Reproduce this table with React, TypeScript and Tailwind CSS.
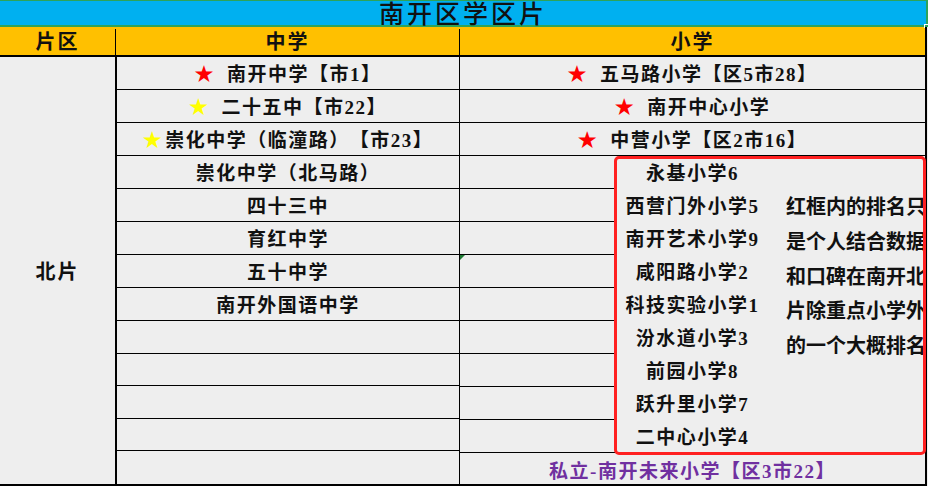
import React from "react";

type Cell = { star?: "red" | "yellow"; gap?: boolean; text: string; purple?: boolean };

const mid: Cell[] = [
  { star: "red", gap: true, text: "南开中学【市1】" },
  { star: "yellow", gap: true, text: "二十五中【市22】" },
  { star: "yellow", gap: false, text: "崇化中学（临潼路）【市23】" },
  { text: "崇化中学（北马路）" },
  { text: "四十三中" },
  { text: "育红中学" },
  { text: "五十中学" },
  { text: "南开外国语中学" },
  { text: "" },
  { text: "" },
  { text: "" },
  { text: "" },
  { text: "" },
];

const pri: Cell[] = [
  { star: "red", gap: true, text: "五马路小学【区5市28】" },
  { star: "red", gap: true, text: "南开中心小学" },
  { star: "red", gap: true, text: "中营小学【区2市16】" },
  { text: "永基小学6" },
  { text: "西营门外小学5" },
  { text: "南开艺术小学9" },
  { text: "咸阳路小学2" },
  { text: "科技实验小学1" },
  { text: "汾水道小学3" },
  { text: "前园小学8" },
  { text: "跃升里小学7" },
  { text: "二中心小学4" },
  { text: "私立-南开未来小学【区3市22】", purple: true },
];

function Content({ c }: { c: Cell }) {
  if (!c.text) return null;
  return (
    <span
      className={
        "relative z-20 whitespace-nowrap " + (c.purple ? "text-[#7030a0]" : "text-[#111111]")
      }
    >
      {c.star === "red" && (
        <span className={"text-[#ff0000] " + (c.gap ? "mr-[12px]" : "mr-[2px]")}>★</span>
      )}
      {c.star === "yellow" && (
        <span className={"text-[#ffff00] " + (c.gap ? "mr-[12px]" : "mr-[2px]")}>★</span>
      )}
      {c.text}
    </span>
  );
}

const notes = ["红框内的排名只", "是个人结合数据", "和口碑在南开北", "片除重点小学外", "的一个大概排名"];

export default function App() {
  return (
    <div
      className="relative w-[928px] h-[486px] overflow-hidden bg-[#eeeeee] [text-spacing-trim:space-all]"
      style={{ fontFamily: "'Liberation Serif', 'Noto Sans CJK SC', serif" }}
    >
      {/* title */}
      <div className="h-[27px] w-[928px] bg-[#00b0f0] border-t border-b-2 border-r-2 border-[#2ea35a] flex items-center justify-center pt-[2px]">
        <span className="text-[25px] leading-none tracking-[3px] text-[#111111] font-medium">南开区学区片</span>
      </div>
      {/* header */}
      <div className="flex h-[30px] w-[927px] bg-[#ffc000] border-b-2 border-r-2 border-black text-[20px] font-bold text-[#111111] tracking-[2px] pt-[2px]">
        <div className="w-[116px] border-r border-black flex items-center justify-center">片区</div>
        <div className="w-[344px] border-r border-black flex items-center justify-center">中学</div>
        <div className="flex-1 flex items-center justify-center">小学</div>
      </div>
      {/* body */}
      <div className="flex w-[927px] h-[429px] border-b-2 border-r-2 border-black text-[19px] font-semibold tracking-[1.5px]">
        <div className="w-[117px] border-r-2 border-black flex items-center justify-center pt-[2px]">
          <span className="text-[20px] font-bold tracking-[2px] text-[#111111]">北片</span>
        </div>
        <div className="w-[343px] border-r border-black flex flex-col">
          {mid.map((c, i) => (
            <div
              key={i}
              className={
                "h-[33px] flex items-center justify-center pt-[5px] " + (i < 12 ? "border-b border-black" : "")
              }
            >
              <Content c={c} />
            </div>
          ))}
        </div>
        <div className="flex-1 flex flex-col">
          {pri.map((c, i) => (
            <div
              key={i}
              className={
                "h-[33px] flex items-center justify-center pt-[5px] " + (i < 12 ? "border-b border-black" : "")
              }
            >
              <Content c={c} />
            </div>
          ))}
        </div>
      </div>

      {/* red frame overlay */}
      <div className="absolute z-10 left-[614px] top-[156px] w-[312px] h-[299px] border-[3px] border-[#ff2020] rounded-[5px] bg-[#eeeeee] overflow-hidden">
        <div
          className="absolute left-[169px] top-[30px] flex flex-col text-[20px] leading-[34.8px] font-bold text-[#111111] whitespace-nowrap"
          style={{ fontFamily: "'Noto Sans CJK SC', sans-serif" }}
        >
          {notes.map((n) => (
            <span key={n}>{n}</span>
          ))}
        </div>
      </div>

      {/* excel markers */}
      <div className="absolute left-[460px] top-[255px] w-0 h-0 border-t-[5px] border-r-[5px] border-t-[#1e7b34] border-r-transparent" />
      <div className="absolute left-[924px] top-[24px] w-[4px] h-[4px] border-t border-l border-white" />
    </div>
  );
}
